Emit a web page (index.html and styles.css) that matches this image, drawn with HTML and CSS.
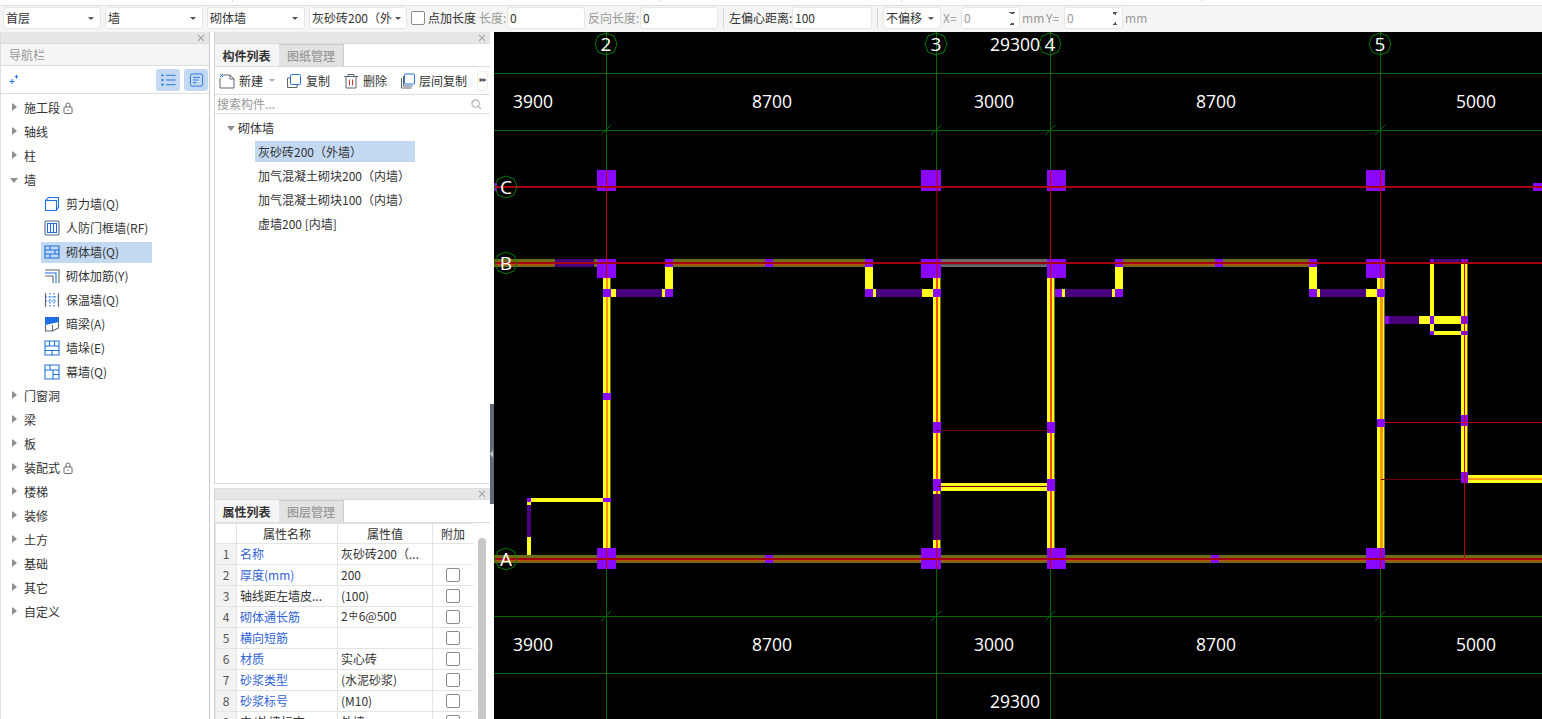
FILE: index.html
```html
<!DOCTYPE html>
<html lang="zh">
<head>
<meta charset="utf-8">
<title>砌体墙</title>
<link rel="stylesheet" href="styles.css">
</head>
<body>
<div class="topstrip"><i class="s1"></i><i class="s2"></i><i class="s3"></i><i class="s4"></i></div>
<div class="toolbar">
  <div class="sel w98"><span>首层</span><b></b></div>
  <div class="sel w98"><span>墙</span><b></b></div>
  <div class="sel w98"><span>砌体墙</span><b></b></div>
  <div class="sel w98 clip"><span>灰砂砖200（外墙）</span><b></b></div>
  <label class="chk"><i class="box"></i>点加长度</label>
  <span class="lbl muted l1">长度:</span><div class="inp w78">0</div>
  <span class="lbl muted l2">反向长度:</span><div class="inp w78">0</div>
  <i class="sep"></i>
  <span class="lbl l3">左偏心距离:</span><div class="inp w80">100</div>
  <i class="sep"></i>
  <div class="sel w58"><span>不偏移</span><b></b></div>
  <span class="lbl muted l4">X=</span><div class="inp spin w59 muted">0<em></em></div>
  <span class="lbl muted l5">mm</span><span class="lbl muted l4">Y=</span><div class="inp spin w59 muted">0<em></em></div>
  <span class="lbl muted l5">mm</span>
</div>
<div class="main">
  <aside class="nav">
    <div class="grip"><svg class="x" viewBox="0 0 8 8"><path d="M1 1l6 6M7 1L1 7"/></svg></div>
    <div class="navhead">导航栏</div>
    <div class="navtools">
      <svg class="plus" viewBox="0 0 10 10"><path d="M3 4v5M.5 6.500h5M7.500 0v3.500M5.800 1.700h3.400"/></svg>
      <span class="tbtn"><svg viewBox="0 0 16 14"><path d="M5.500 2h10M5.500 7h10M5.500 12h10"/><circle cx="1.500" cy="2" r="1.200"/><circle cx="1.500" cy="7" r="1.200"/><circle cx="1.500" cy="12" r="1.200"/></svg></span>
      <span class="tbtn"><svg viewBox="0 0 16 16"><rect x="1" y="1" width="14" height="14" rx="2"/><path d="M4 5h8M4 8h6M4 11h4"/></svg></span>
    </div>
    <ul class="tree">
      <li class="r"><i class="car"></i>施工段<svg class="lock" viewBox="0 0 10 12"><rect x="1" y="5" width="8" height="6.500" rx="1"/><path d="M3 5V3a2 2 0 0 1 4 0v2M5 7.500v1.500"/></svg></li>
      <li class="r"><i class="car"></i>轴线</li>
      <li class="r"><i class="car"></i>柱</li>
      <li class="r"><i class="car open"></i>墙</li>
      <li class="s"><svg viewBox="0 0 16 16"><path class="bl" d="M1.500 4.500h11v10h-11zM1.500 4.500l3-3h10v10l-2 2"/></svg>剪力墙(Q)</li>
      <li class="s"><svg viewBox="0 0 16 16"><rect class="gy" x="1" y="1" width="14" height="14" rx="1.500"/><path class="bl" d="M3.500 3.500h9v9h-9zM6.500 3.500v9M9.500 3.500v9"/></svg>人防门框墙(RF)</li>
      <li class="s on"><svg viewBox="0 0 16 16"><path class="bl" d="M1 2h14v12H1zM1 6h14M1 10h14M6 2v4M11 6v4M6 10v4"/></svg>砌体墙(Q)</li>
      <li class="s"><svg viewBox="0 0 16 16"><path class="gy" d="M1 2h14v13M1 8h8v7"/><path class="bl" d="M1 5h11v10"/></svg>砌体加筋(Y)</li>
      <li class="s"><svg viewBox="0 0 16 16"><path class="gy" d="M1.500 1v14M14.500 1v14"/><path class="bl dot" d="M6 1v14M10 1v14M1.500 5h13M1.500 9h13"/></svg>保温墙(Q)</li>
      <li class="s"><svg viewBox="0 0 16 16"><path class="fill" d="M1 1h14v5L1 9z"/><path class="gy" d="M1.500 9v6h7l6-3V6M8.500 9v6"/></svg>暗梁(A)</li>
      <li class="s"><svg viewBox="0 0 16 16"><path class="bl" d="M1 1h14v14H1zM1 6h14M1 10.500h14M5.500 1v5M10.500 1v5M8 10.500V15"/></svg>墙垛(E)</li>
      <li class="s"><svg viewBox="0 0 16 16"><path class="bl" d="M1 1h14v14H1zM1 6h14M6 1v5M9 6v9M9 10.500h6"/></svg>幕墙(Q)</li>
      <li class="r"><i class="car"></i>门窗洞</li>
      <li class="r"><i class="car"></i>梁</li>
      <li class="r"><i class="car"></i>板</li>
      <li class="r"><i class="car"></i>装配式<svg class="lock" viewBox="0 0 10 12"><rect x="1" y="5" width="8" height="6.500" rx="1"/><path d="M3 5V3a2 2 0 0 1 4 0v2M5 7.500v1.500"/></svg></li>
      <li class="r"><i class="car"></i>楼梯</li>
      <li class="r"><i class="car"></i>装修</li>
      <li class="r"><i class="car"></i>土方</li>
      <li class="r"><i class="car"></i>基础</li>
      <li class="r"><i class="car"></i>其它</li>
      <li class="r"><i class="car"></i>自定义</li>
    </ul>
  </aside>
  <section class="mid">
    <div class="panel top">
      <div class="grip"><svg class="x" viewBox="0 0 8 8"><path d="M1 1l6 6M7 1L1 7"/></svg></div>
      <div class="tabs"><span class="tab act">构件列表</span><span class="tab">图纸管理</span></div>
      <div class="acts">
        <span class="act1"><svg viewBox="0 0 16 16"><path class="gy" d="M4 2h7l4 4v9H1V5"/><path class="gy" d="M11 2v4h4"/><path class="bl" d="M1 1l3 3M4 1L1 4"/></svg>新建<i class="dn"></i></span>
        <span class="act2"><svg viewBox="0 0 16 16"><path class="gy" d="M4 5H1.500v9.500H11V12"/><rect class="bl" x="4.500" y="1.500" width="10" height="10" rx="1"/></svg>复制</span>
        <span class="act3"><svg viewBox="0 0 16 16"><path class="gy" d="M1 3.500h14M5 3.500V1.500h6v2M3 3.500v11.500h10V3.500"/><path class="rd" d="M6.500 6.500v6M9.500 6.500v6"/></svg>删除</span>
        <span class="act4"><svg viewBox="0 0 16 16"><path class="gy" d="M2.500 5v10h10"/><path class="gy" d="M4.500 3v10h9"/><rect class="bl" x="5.500" y="1" width="10" height="10" rx="1"/></svg>层间复制</span>
        <span class="more">▸▸</span>
      </div>
      <div class="search"><span>搜索构件...</span><svg viewBox="0 0 12 12"><circle cx="5" cy="5" r="4"/><path d="M8 8l3 3"/></svg></div>
      <div class="list">
        <div class="grp"><i class="car open"></i>砌体墙</div>
        <div class="it on">灰砂砖200（外墙）</div>
        <div class="it">加气混凝土砌块200（内墙）</div>
        <div class="it">加气混凝土砌块100（内墙）</div>
        <div class="it">虚墙200 [内墙]</div>
      </div>
    </div>
    <div class="panel low">
      <div class="grip"><svg class="x" viewBox="0 0 8 8"><path d="M1 1l6 6M7 1L1 7"/></svg></div>
      <div class="tabs"><span class="tab act">属性列表</span><span class="tab">图层管理</span></div>
      <div class="tblwrap">
        <table>
          <colgroup><col class="c0"><col class="c1"><col class="c2"><col class="c3"></colgroup>
          <tr class="hd"><th></th><th>属性名称</th><th>属性值</th><th>附加</th></tr>
          <tr><td class="n">1</td><td class="blue">名称</td><td>灰砂砖200（...</td><td></td></tr>
          <tr><td class="n">2</td><td class="blue">厚度(mm)</td><td>200</td><td class="k"><i class="box"></i></td></tr>
          <tr><td class="n">3</td><td>轴线距左墙皮...</td><td>(100)</td><td class="k"><i class="box"></i></td></tr>
          <tr><td class="n">4</td><td class="blue">砌体通长筋</td><td>2<span class="rb">中</span>6@500</td><td class="k"><i class="box"></i></td></tr>
          <tr><td class="n">5</td><td class="blue">横向短筋</td><td></td><td class="k"><i class="box"></i></td></tr>
          <tr><td class="n">6</td><td class="blue">材质</td><td>实心砖</td><td class="k"><i class="box"></i></td></tr>
          <tr><td class="n">7</td><td class="blue">砂浆类型</td><td>(水泥砂浆)</td><td class="k"><i class="box"></i></td></tr>
          <tr><td class="n">8</td><td class="blue">砂浆标号</td><td>(M10)</td><td class="k"><i class="box"></i></td></tr>
          <tr><td class="n">9</td><td>内/外墙标志</td><td>外墙</td><td class="k"><i class="box"></i></td></tr>
        </table>
        <div class="sb"><i></i></div>
      </div>
    </div>
  </section>
  <div class="split"><span class="handle"></span></div>
  <div class="canvas">
    <svg viewBox="494 32 1048 687" width="1048" height="687" xmlns="http://www.w3.org/2000/svg">
      <rect x="494" y="32" width="1048" height="687" fill="#000"/>
      <g class="gl">
        <path d="M494 73.500h1048M494 130.500h1048M494 616.500h1048M494 673.500h1048"/>
        <path d="M606.500 32V170M936.500 32V170M1050.500 32V170M1380.500 32V170M606.500 569V719M936.500 569V719M1050.500 569V719M1380.500 569V719"/>
        <path d="M601 135l10-10M931 135l10-10M1045 135l10-10M1375 135l10-10M601 621l10-10M931 621l10-10M1045 621l10-10M1375 621l10-10"/>
      </g>
      <g class="olive">
        <rect x="494" y="259" width="61" height="8"/><rect x="594" y="259" width="3" height="8"/>
        <rect x="673" y="259" width="192" height="8"/><rect x="1123" y="259" width="186" height="8"/>
        <rect x="494" y="555" width="1048" height="8"/>
        <rect x="610" y="278" width="1" height="270"/><rect x="940" y="278" width="1" height="270"/>
        <rect x="1054" y="278" width="1" height="270"/><rect x="1384" y="278" width="1" height="270"/>
        <rect x="1467" y="263" width="1" height="217"/>
      </g>
      <rect class="gray" x="941" y="259" width="106" height="8"/>
      <rect class="gray2" x="941" y="262" width="106" height="3"/>
      <g class="core">
        <rect x="494" y="262" width="61" height="3"/><rect x="673" y="262" width="192" height="3"/><rect x="1123" y="262" width="186" height="3"/>
        <rect x="494" y="558" width="1048" height="3"/>
      </g>
      <g class="yw">
        <rect x="603" y="278" width="7" height="270"/>
        <rect x="933" y="278" width="7" height="270"/>
        <rect x="1047" y="278" width="7" height="270"/>
        <rect x="1377" y="278" width="7" height="270"/>
        <rect x="665" y="267" width="8" height="22"/><rect x="865" y="267" width="8" height="22"/>
        <rect x="1115" y="267" width="8" height="22"/><rect x="1309" y="267" width="8" height="22"/>
        <rect x="611" y="289" width="5" height="8"/><rect x="662" y="289" width="3" height="8"/>
        <rect x="873" y="289" width="3" height="8"/><rect x="922" y="289" width="11" height="8"/>
        <rect x="1062" y="289" width="3" height="8"/><rect x="1112" y="289" width="3" height="8"/>
        <rect x="1317" y="289" width="3" height="8"/><rect x="1366" y="289" width="11" height="8"/>
        <rect x="1461" y="263" width="6" height="217"/>
        <rect x="1430" y="263" width="4" height="68"/>
        <rect x="1419" y="316" width="11" height="8"/><rect x="1434" y="316" width="27" height="8"/>
        <rect x="1434" y="331" width="27" height="4"/>
        <rect x="1468" y="475" width="74" height="8"/>
        <rect x="941" y="483" width="106" height="8"/>
        <rect x="531" y="498" width="72" height="4"/>
        <rect x="527" y="502" width="4" height="3"/><rect x="527" y="537" width="4" height="18"/>
      </g>
      <g class="ctr">
        <rect x="606" y="278" width="2" height="270"/><rect x="1380" y="278" width="3" height="270"/>
        <rect x="1468" y="478" width="74" height="2"/>
      </g>
      <g class="hot">
        <rect x="936" y="278" width="2" height="270"/><rect x="1050" y="278" width="2" height="270"/>
      </g>
      <g class="dk">
        <rect x="555" y="259" width="39" height="8" rx="2"/>
        <rect x="616" y="289" width="46" height="8" rx="1"/><rect x="876" y="289" width="46" height="8" rx="1"/>
        <rect x="1065" y="289" width="47" height="8" rx="1"/><rect x="1320" y="289" width="46" height="8" rx="1"/>
        <rect x="1389" y="316" width="30" height="8" rx="1"/>
        <rect x="1435" y="259" width="25" height="4" rx="1"/>
        <rect x="527" y="505" width="4" height="32"/>
        <rect x="933" y="494" width="8" height="46"/>
      </g>
      <g class="pp">
        <rect x="597" y="170" width="19" height="21"/><rect x="921" y="170" width="20" height="21"/>
        <rect x="1047" y="170" width="19" height="21"/><rect x="1366" y="170" width="19" height="21"/>
        <rect x="1533" y="183" width="9" height="8"/><rect x="494" y="183" width="3" height="8"/>
        <rect x="597" y="259" width="19" height="19"/><rect x="921" y="259" width="20" height="19"/>
        <rect x="1047" y="259" width="19" height="19"/><rect x="1366" y="259" width="19" height="19"/>
        <rect x="597" y="548" width="19" height="21"/><rect x="921" y="548" width="20" height="21"/>
        <rect x="1047" y="548" width="19" height="21"/><rect x="1366" y="548" width="19" height="21"/>
        <rect x="665" y="259" width="8" height="8"/><rect x="865" y="259" width="8" height="8"/><rect x="765" y="259" width="8" height="8"/>
        <rect x="1115" y="259" width="8" height="8"/><rect x="1215" y="259" width="8" height="8"/><rect x="1309" y="259" width="8" height="8"/>
        <rect x="765" y="555" width="8" height="8"/><rect x="1211" y="555" width="8" height="8"/>
        <rect x="603" y="289" width="8" height="8"/><rect x="665" y="289" width="8" height="8"/>
        <rect x="865" y="289" width="8" height="8"/><rect x="933" y="289" width="8" height="8"/>
        <rect x="1055" y="289" width="7" height="8"/><rect x="1115" y="289" width="8" height="8"/>
        <rect x="1309" y="289" width="8" height="8"/><rect x="1377" y="289" width="8" height="8"/>
        <rect x="603" y="393" width="8" height="7"/><rect x="603" y="498" width="8" height="4"/>
        <rect x="527" y="498" width="4" height="4"/>
        <rect x="933" y="422" width="8" height="11"/><rect x="1047" y="422" width="8" height="11"/>
        <rect x="933" y="479" width="8" height="12"/><rect x="1047" y="479" width="8" height="12"/>
        <rect x="1377" y="419" width="8" height="8"/><rect x="1461" y="415" width="7" height="11"/><rect x="1461" y="472" width="7" height="11"/>
        <rect x="1430" y="259" width="4" height="4"/><rect x="1461" y="259" width="7" height="4"/>
        <rect x="1385" y="316" width="4" height="8"/><rect x="1430" y="316" width="4" height="8"/><rect x="1461" y="316" width="7" height="8"/>
        <rect x="1430" y="331" width="4" height="4"/><rect x="1461" y="331" width="7" height="4"/>
      </g>
      <g class="rl">
        <path class="wide" d="M494 187h1048M494 263h1048M494 559h1048"/>
        <path d="M606.500 170V278M937 170V278M1050.500 170V278M1380.500 170V278"/>
        <path d="M606.500 548V569M936.500 548V569M1050.500 548V569M1380.500 548V569"/>
        <path d="M1464.500 259V559"/>
        <path d="M1385 422.500h157"/>
      </g>
      <g class="rd2">
        <path d="M937 430.500h113M1381 479.500h80"/>
        <path d="M937 486.500h110"/>
        <path d="M936.500 494v46"/>
      </g>
      <g class="bub">
        <path d="M595 44l3-8 8-3 8 3 3 8-3 8-8 3-8-3z"/>
        <path d="M925 44l3-8 8-3 8 3 3 8-3 8-8 3-8-3z"/>
        <path d="M1039 44l3-8 8-3 8 3 3 8-3 8-8 3-8-3z"/>
        <path d="M1369 44l3-8 8-3 8 3 3 8-3 8-8 3-8-3z"/>
        <path d="M495 187l3-8 8-3 8 3 3 8-3 8-8 3-8-3z"/>
        <path d="M495 263l3-8 8-3 8 3 3 8-3 8-8 3-8-3z"/>
        <path d="M495 559l3-8 8-3 8 3 3 8-3 8-8 3-8-3z"/>
      </g>
      <g class="lab">
        <text class="big" x="606" y="51">2</text><text class="big" x="936" y="51">3</text><text class="big" x="1050" y="51">4</text><text class="big" x="1380" y="51">5</text>
        <text class="big" x="506" y="194">C</text><text class="big" x="506" y="270">B</text><text class="big" x="506" y="566">A</text>
        <text x="1015" y="51">29300</text>
        <text x="533" y="108">3900</text><text x="772" y="108">8700</text><text x="994" y="108">3000</text><text x="1216" y="108">8700</text><text x="1476" y="108">5000</text>
        <text x="533" y="651">3900</text><text x="772" y="651">8700</text><text x="994" y="651">3000</text><text x="1216" y="651">8700</text><text x="1476" y="651">5000</text>
        <text x="1015" y="708">29300</text>
      </g>
    </svg>
  </div>
</div>
</body>
</html>
```
FILE: styles.css
```css
* { box-sizing: border-box; }
html, body { margin: 0; height: 719px; overflow: hidden; background: #fff; }
body { font: 12px/1.3 "Noto Sans CJK SC", "Liberation Sans", sans-serif; color: #333; }
svg { display: block; fill: none; }

.topstrip { height: 6px; background: #fff; border-bottom: 1px solid #dedede; display: flex; }
.topstrip i { height: 2px; border-right: 1px solid #ddd; display: block; }
.s1 { width: 233px; } .s2 { width: 428px; } .s3 { width: 241px; } .s4 { width: 300px; }

.toolbar { height: 26px; background: #f5f5f5; display: flex; align-items: center; padding: 0 0 2px 3px; white-space: nowrap; }
.sel { height: 22px; background: #fff; border: 1px solid #e6e6e6; border-radius: 3px; display: flex; align-items: center; padding: 0 4px 0 2px; margin-right: 4px; }
.sel span { flex: 1; }
.sel b { width: 0; height: 0; border: 3px solid transparent; border-top: 3px solid #555; border-bottom: 0; margin: 0 2px 0 3px; }
.w98 { width: 98px; } .w58 { width: 58px; margin-right: 2px; }
.clip span { width: 80px; flex: none; overflow: hidden; white-space: nowrap; }
.chk { display: flex; align-items: center; gap: 3px; margin-right: 3px; }
.box { display: inline-block; width: 14px; height: 14px; border: 1px solid #8a8a8a; border-radius: 2px; background: #fff; }
.lbl { display: inline-block; }
.muted { color: #999; }
.l1 { width: 28px; } .l2 { width: 52px; margin-left: 3px; } .l3 { width: 63px; }
.l4 { width: 18px; } .l5 { width: 24px; margin-left: 2px; }
.inp { height: 22px; background: #fff; border: 1px solid #e6e6e6; border-radius: 3px; padding: 0 2px; display: flex; align-items: center; position: relative; }
.w78 { width: 78px; } .w80 { width: 80px; } .w59 { width: 59px; }
.sep { width: 1px; height: 20px; background: #d5d5d5; margin: 0 5px; }
.spin em { position: absolute; right: 4px; top: 4px; width: 6px; height: 13px; background:
  linear-gradient(45deg, transparent 50%, #555 50%) 0 0 / 3px 3px no-repeat,
  linear-gradient(-45deg, transparent 50%, #555 50%) 3px 0 / 3px 3px no-repeat,
  linear-gradient(135deg, transparent 50%, #555 50%) 0 10px / 3px 3px no-repeat,
  linear-gradient(-135deg, transparent 50%, #555 50%) 3px 10px / 3px 3px no-repeat; }

.main { display: flex; height: 687px; background: #fff; }
.grip { height: 12px; background: #e6e6e6; border-bottom: 1px solid #dcdcdc; display: flex; justify-content: flex-end; align-items: center; padding-right: 4px; }
.low .grip { height: 11px; }
.x { width: 8px; height: 8px; stroke: #aaa; stroke-width: 1.100; }

.nav { width: 210px; border-right: 1px solid #c9c9c9; border-left: 1px solid #ddd; margin-right: 4px; height: 100%; }
.navhead { height: 22px; background: #f5f5f5; color: #999; display: flex; align-items: center; padding-left: 8px; border-bottom: 1px solid #dcdcdc; }
.navtools { height: 28px; display: flex; align-items: center; justify-content: flex-end; gap: 4px; padding-right: 1px; border-bottom: 1px solid #ddd; }
.plus { width: 10px; height: 10px; stroke: #1e6fe0; stroke-width: 1; margin-right: auto; margin-left: 8px; }
.tbtn { width: 24px; height: 22px; background: #c2d9f1; border-radius: 3px; display: flex; align-items: center; justify-content: center; }
.tbtn svg { width: 15px; height: 14px; stroke: #1e6fe0; stroke-width: 1; }
.tbtn circle { fill: #1e6fe0; stroke: none; }

.tree { list-style: none; margin: 2px 0 0; padding: 0; }
.tree li { height: 24px; display: flex; align-items: center; position: relative; }
.r { padding-left: 23px; }
.car { position: absolute; left: 11px; top: 7px; width: 0; height: 0; border: 4px solid transparent; border-left: 5px solid #8f8f8f; border-right: 0; }
.car.open { left: 9px; top: 10px; border: 4px solid transparent; border-top: 5px solid #8f8f8f; border-bottom: 0; }
.lock { width: 10px; height: 12px; stroke: #666; stroke-width: 1; margin-left: 3px; }
.s { padding-left: 43px; }
.s svg { width: 16px; height: 16px; margin-right: 6px; stroke-width: 1.100; flex: none; }
.bl { stroke: #1e6fe0; }
.gy { stroke: #5d6673; }
.rd { stroke: #e03030; }
.dot { stroke-dasharray: 1.500 1.500; }
.fill { fill: #1e6fe0; }
.tree li.on { background: linear-gradient(#c2d9f1, #c2d9f1) 40px 2px / 111px 21px no-repeat; }

.mid { width: 276px; height: 100%; display: flex; flex-direction: column; gap: 4px; }
.panel { border-left: 1px solid #d4d4d4; }
.top { height: 452px; border-bottom: 1px solid #ddd; }
.low { flex: 1; overflow: hidden; border-top: 1px solid #ddd; }
.tabs { height: 23px; display: flex; background: #fff; border-bottom: 1px solid #dcdcdc; }
.tab { width: 65px; height: 22px; background: #e2e2e2; color: #999; font-weight: 500; display: flex; align-items: center; justify-content: center; border: 1px solid #ccc; border-bottom: 0; border-left: 0; }
.tab.act { width: 64px; background: #f5f5f5; color: #333; font-weight: 700; border-color: #f5f5f5; }
.acts { height: 28px; display: flex; align-items: center; padding-left: 4px; border-bottom: 1px solid #ddd; }
.acts span { display: flex; align-items: center; }
.acts svg { width: 16px; height: 16px; margin-right: 4px; stroke-width: 1; }
.act1 { width: 67px; } .act2 { width: 57px; } .act3 { width: 56px; } .act4 { width: 78px; }
.dn { width: 0; height: 0; border: 3px solid transparent; border-top: 3px solid #aaa; border-bottom: 0; margin-left: 6px; }
.more { width: 11px; height: 20px; font-size: 8px; color: #555; justify-content: center; background: #fff; border: 1px solid #eee; border-radius: 3px; letter-spacing: -1px; font-family: "DejaVu Sans", sans-serif; }
.search { height: 19px; padding: 0 8px 0 2px; display: flex; align-items: center; justify-content: space-between; color: #999; border-bottom: 1px solid #ddd; }
.search svg { width: 11px; height: 11px; stroke: #aaa; stroke-width: 1.200; }
.list { padding-top: 2px; }
.grp { height: 24px; display: flex; align-items: center; padding-left: 23px; position: relative; }
.grp .car.open { left: 12px; top: 10px; }
.it { height: 24px; display: flex; align-items: center; padding-left: 43px; white-space: nowrap; }
.it.on { background: linear-gradient(#c2d9f1, #c2d9f1) 40px 1px / 160px 21px no-repeat; }

.tblwrap { position: relative; }
table { border-collapse: collapse; table-layout: fixed; width: 258px; }
.c0 { width: 21px; } .c1 { width: 101px; } .c2 { width: 95px; } .c3 { width: 41px; }
tr { height: 21px; }
tr.hd { height: 20px; }
th, td { border: 1px solid #e4e4e4; padding: 0 2px 0 3px; font-weight: 400; white-space: nowrap; line-height: 16px; height: inherit; }
th { text-align: center; padding: 0; }
.hd th:first-child { background: #fff; }
.n { background: #f3f3f3; text-align: center; color: #555; padding: 0; }
.blue { color: #2f62d8; }
.k { text-align: center; padding: 0; }
.k .box { display: block; margin: 0 auto; }
.rb { font-size: 9px; position: relative; top: -2px; margin: 0 1px; }
.sb { position: absolute; left: 258px; top: 0; width: 16px; height: 200px; background: #fff; }
.sb i { position: absolute; left: 5px; top: 15px; width: 8px; height: 190px; background: #c8c8c8; border-radius: 4px; }

.split { width: 4px; background: #fff; position: relative; }
.handle { position: absolute; left: 0; top: 372px; width: 4px; height: 100px; background: #626b75; }
.handle::before { content: ""; position: absolute; left: 0; top: 46px; width: 0; height: 0; border: 4px solid transparent; border-right: 3px solid #c4c8cc; border-left: 0; }

.canvas { width: 1048px; height: 687px; }
.gl path { stroke: #006a00; stroke-width: 1; }
.olive rect { fill: #6d6d14; }
.gray { fill: #6a6a6a; } .gray2 { fill: #555; }
.core rect { fill: #c24d0c; }
.yw rect { fill: #ffff1e; }
.ctr rect { fill: #ff9a14; }
.hot rect { fill: #ff4a1e; }
.dk rect { fill: #48007c; }
.pp rect { fill: #8a06ff; }
.rl path { stroke: #c00000; stroke-width: 1; }
.rl path.wide { stroke: #a80010; stroke-width: 2; }
.rd2 path { stroke: #6e0000; stroke-width: 1; }
.bub path { stroke: #0a7a0a; stroke-width: 1; fill: none; }
.lab text { fill: #fff; font: 17.500px "Open Sans", sans-serif; text-anchor: middle; }
.lab text.big { font-size: 19px; }
```
